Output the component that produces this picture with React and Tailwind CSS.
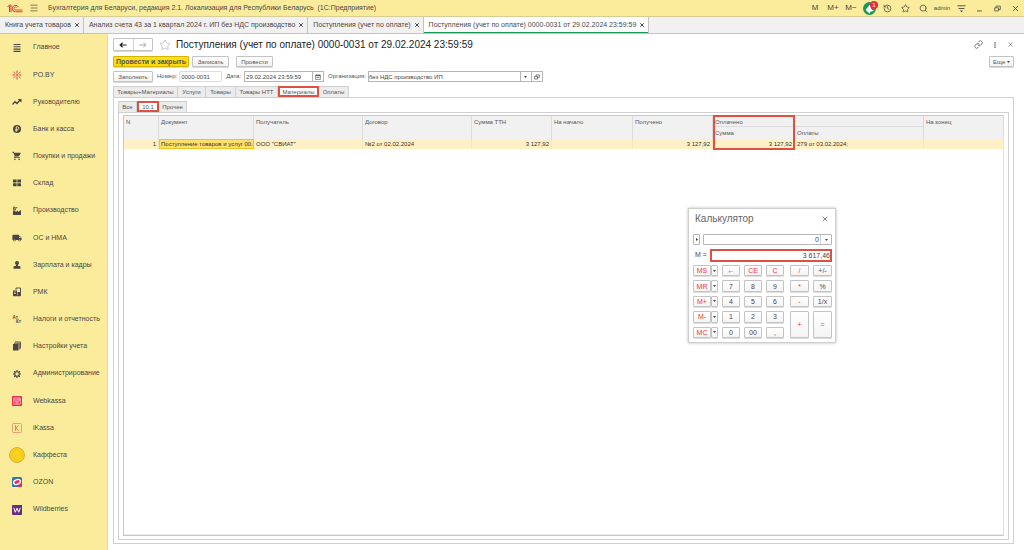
import React from "react";
import { MdShoppingCart, MdLocalShipping } from "react-icons/md";
import { History, Link, Search, Star, X } from "lucide-react";

const openTabs = [
  { title: "Книга учета товаров" },
  { title: "Анализ счета 43 за 1 квартал 2024 г. ИП без НДС производство" },
  { title: "Поступления (учет по оплате)" },
  {
    title: "Поступления (учет по оплате) 0000-0031 от 29.02.2024 23:59:59",
    active: true,
  },
];

const Svg = ({ children, className = "size-[10px]" }) => (
  <svg viewBox="0 0 20 20" className={className} fill="none" aria-hidden="true">
    {children}
  </svg>
);

const sections = [
  {
    name: "Главное",
    icon: (
      <Svg>
        <path d="M3 3h14M3 7.6h14M3 12.2h14M3 16.8h14" stroke="#4d4545" strokeWidth="2.2" />
      </Svg>
    ),
  },
  {
    name: "PO.BY",
    icon: (
      <Svg>
        <path
          d="M10 1v6M10 13v6M1 10h5M14 10h5M3 4l4 3.500M17 4l-4 3.500M3 16l4-3.500M17 16l-4-3.500"
          stroke="#e0444c"
          strokeWidth="2"
        />
        <circle cx="10" cy="10" r="1.800" fill="#e0444c" />
      </Svg>
    ),
  },
  {
    name: "Руководителю",
    icon: (
      <Svg>
        <path d="M1 15l5-5.500 4 3.500 6-7" stroke="#4d4545" strokeWidth="2.600" />
        <path d="M11.500 4H19v7.500z" fill="#4d4545" />
      </Svg>
    ),
  },
  {
    name: "Банк и касса",
    icon: (
      <Svg>
        <circle cx="10" cy="10" r="8" fill="#4d4545" />
        <path d="M8.500 15.500V5.500h2.500a2.700 2.700 0 010 5.400H6.500M6.500 13.300h4.500" stroke="#faec9b" strokeWidth="1.700" />
      </Svg>
    ),
  },
  { name: "Покупки и продажи", icon: <MdShoppingCart className="size-[10px]" /> },
  {
    name: "Склад",
    icon: (
      <Svg>
        <path d="M2 3h7.300v6H2zM10.700 3H18v6h-7.300zM2 10.500h7.300v6H2zM10.700 10.500H18v6h-7.300z" fill="#4d4545" />
      </Svg>
    ),
  },
  {
    name: "Производство",
    icon: (
      <Svg>
        <path d="M2 18V9h5v3l5-3v3l6-4v10z" fill="#4d4545" />
        <path d="M3.500 8V4M6.500 8V5M2 2.500h4M6.500 3.500h4" stroke="#4d4545" strokeWidth="2.200" />
      </Svg>
    ),
  },
  { name: "ОС и НМА", icon: <MdLocalShipping className="size-[10px]" /> },
  {
    name: "Зарплата и кадры",
    icon: (
      <Svg>
        <circle cx="10" cy="6" r="4" fill="#4d4545" />
        <path d="M8 9h4v2.500l5 1.500v4.500H3V13l5-1.500z" fill="#4d4545" />
      </Svg>
    ),
  },
  {
    name: "РМК",
    icon: (
      <Svg>
        <path d="M2 7h8v11H2zM11 10h6v8h-6z" fill="#4d4545" />
        <path d="M8 6V2h9v15.500H3" stroke="#4d4545" strokeWidth="1.800" />
        <path d="M4 10h4M4 13h4M10.500 5h4" stroke="#faec9b" strokeWidth="1.300" />
      </Svg>
    ),
  },
  {
    name: "Налоги и отчетность",
    icon: (
      <Svg>
        <text x="1" y="9" fontSize="9" fontWeight="bold" fill="#4d4545">Ат</text>
        <text x="8" y="18" fontSize="9" fontWeight="bold" fill="#4d4545">Кт</text>
      </Svg>
    ),
  },
  {
    name: "Настройки учета",
    icon: (
      <Svg>
        <path d="M2 6h11v13H2z" fill="#4d4545" />
        <path d="M4 4.500h10.500V17M6 2h11v13" stroke="#4d4545" strokeWidth="1.800" />
      </Svg>
    ),
  },
  {
    name: "Администрирование",
    icon: (
      <Svg>
        <circle cx="10" cy="10" r="4.600" stroke="#4d4545" strokeWidth="2.200" />
        <path
          d="M10 2v3M10 15v3M2 10h3M15 10h3M4.300 4.300l2.200 2.200M13.500 13.500l2.200 2.200M4.300 15.700l2.200-2.200M13.500 6.500l2.200-2.200"
          stroke="#4d4545"
          strokeWidth="2.400"
        />
      </Svg>
    ),
  },
  {
    name: "Webkassa",
    icon: (
      <Svg>
        <rect width="20" height="20" rx="2" fill="#f5284f" />
        <path d="M3.500 4h13v12h-13zM4 8h12M6 11.500h8M8 14h4M12 5v3" stroke="#fff" strokeWidth="1.300" />
      </Svg>
    ),
  },
  {
    name: "iKassa",
    icon: (
      <Svg>
        <rect x="1" y="1" width="18" height="18" rx="2" stroke="#e58a72" strokeWidth="1.600" />
        <path d="M7 4.500v11M13.500 4.500L8 10l5.500 5.500" stroke="#e3604f" strokeWidth="1.600" />
      </Svg>
    ),
  },
  {
    name: "Каффеста",
    icon: (
      <Svg className="size-4">
        <circle cx="10" cy="10" r="9.300" fill="#fbd320" stroke="#d9a92a" strokeWidth="1.200" />
        <circle cx="10" cy="10" r="6.500" stroke="#f3c313" />
      </Svg>
    ),
  },
  {
    name: "OZON",
    icon: (
      <Svg>
        <rect width="20" height="20" rx="3" fill="#2e74b8" />
        <path d="M20 12v5a3 3 0 01-3 3H10z" fill="#f22a58" />
        <ellipse cx="10" cy="10" rx="7" ry="4.600" transform="rotate(-20 10 10)" fill="#f22a58" stroke="#fff" strokeWidth="2.800" />
      </Svg>
    ),
  },
  {
    name: "Wildberries",
    icon: (
      <Svg>
        <rect width="20" height="20" rx="2" fill="#6f2c84" />
        <path d="M14 0h4a2 2 0 012 2v16a2 2 0 01-2 2h-4z" fill="#4b3a78" />
        <path d="M3.500 5.500L6.500 14.500L10 6.500L13.500 14.500L16.500 5.500" stroke="#fff" strokeWidth="2" />
      </Svg>
    ),
  },
];

const BarButton = ({ label, className = "w-[18px]", children }) => (
  <button type="button" aria-label={label} className={`flex items-center justify-center whitespace-nowrap ${className}`}>
    {children}
  </button>
);

const TitleBar = () => (
  <header className="flex h-[17px] shrink-0 items-center border-b border-[#d8cd96] bg-[#faec9b] text-[7px]">
    <svg viewBox="0 0 32 18" className="ml-[7px] h-[9px] w-4" fill="none" role="img" aria-label="1С">
      <path d="M1 6l4-4v14M5 2h3v14" stroke="#dd3b3b" strokeWidth="2" />
      <path d="M23 6.500A6.500 6.500 0 1017 15.500H31" stroke="#dd3b3b" strokeWidth="2" />
      <path d="M19.500 7A3 3 0 1017 12H31" stroke="#dd3b3b" strokeWidth="1.800" />
    </svg>
    <button type="button" aria-label="Меню" className="ml-[7px]">
      <Svg className="size-[8px]">
        <path d="M1 3h18M1 10h18M1 17h18" stroke="#6b6346" strokeWidth="2" />
      </Svg>
    </button>
    <h1 className="ml-[10px] grow whitespace-pre">
      Бухгалтерия для Беларуси, редакция 2.1. Локализация для Республики Беларусь{"  "}(1С:Предприятие)
    </h1>
    <div className="flex items-center">
      <BarButton className="w-[18px] text-[8px]">M</BarButton>
      <BarButton className="w-[18px] text-[8px]">M+</BarButton>
      <BarButton className="w-[18px] text-[8px]">M−</BarButton>
      <BarButton label="Уведомления" className="relative w-[18px]">
        <Svg className="size-[13px]">
          <circle cx="10" cy="10" r="10" fill="#169a55" />
          <path d="M4 12l7-8 2 7 4 3-6 1-1 3-3-3z" fill="#fff" />
        </Svg>
        <span className="absolute -top-px right-0 flex size-[8px] items-center justify-center rounded-full bg-[#f0283c] text-[6px] leading-none text-white">
          1
        </span>
      </BarButton>
      <BarButton label="История"><History size={9} /></BarButton>
      <BarButton label="Избранное"><Star size={9} /></BarButton>
      <BarButton label="Поиск"><Search size={9} /></BarButton>
      <BarButton className="w-5 text-[6px]">admin</BarButton>
      <BarButton label="Настройки">
        <Svg className="size-[9px]">
          <path d="M1 4h18M3.500 10h13" stroke="#4d4545" strokeWidth="2" />
          <path d="M6.500 14.500h7L10 18.500z" fill="#4d4545" />
        </Svg>
      </BarButton>
      <BarButton label="Свернуть">
        <Svg className="size-[7px]"><path d="M3 17h14" stroke="#4d4545" strokeWidth="2.500" /></Svg>
      </BarButton>
      <BarButton label="Восстановить">
        <Svg className="size-[7px]">
          <path d="M2 8h11v9H2zM6 8V3h12v10h-5" stroke="#4d4545" strokeWidth="2.200" />
        </Svg>
      </BarButton>
      <BarButton label="Закрыть"><X size={9} /></BarButton>
    </div>
  </header>
);

const OpenTabs = () => (
  <nav className="flex h-[17px] shrink-0 border-b border-[#c4c4c4] bg-[#f1f1f1] text-[7px]">
    {openTabs.map(({ title, active }) => (
      <div
        key={title}
        className={`flex items-center gap-[3px] border-r border-[#c4c4c4] pr-[3px] pl-[5px] ${
          active ? "bg-white shadow-[inset_0_-1px_0_#169a55]" : ""
        }`}
      >
        <button type="button" className="whitespace-nowrap">{title}</button>
        <button type="button" aria-label="Закрыть вкладку">
          <X size={6} strokeWidth={4} />
        </button>
      </div>
    ))}
  </nav>
);

const Sidebar = () => (
  <aside className="flex w-[108px] shrink-0 flex-col border-r border-[#f1dc8a] bg-[#faec9b] pb-[27px] text-[7px]">
    {sections.map(({ name, icon }) => (
      <button key={name} type="button" className="flex flex-1 items-center pl-2 text-left">
        <span className="flex w-[18px] justify-center">{icon}</span>
        <span className="ml-[7px] whitespace-nowrap">{name}</span>
      </button>
    ))}
  </aside>
);

const Button = ({ children, className = "" }) => (
  <button
    type="button"
    className={`h-[11px] rounded-[1px] border border-[#c3c3c3] bg-linear-to-b text-center leading-none whitespace-nowrap shadow-[0_1px_0_#d9d9d9] ${className}`}
  >
    {children}
  </button>
);

const Caret = () => (
  <svg viewBox="0 0 6 4" className="inline-block h-[2px] w-[3px]" aria-hidden="true">
    <path d="M0 0h6L3 4z" fill="#4d4545" />
  </svg>
);

const DocumentHeader = () => (
  <>
    <div className="flex h-[13px] items-center">
      <div className="flex h-[13px] w-10 rounded-[1px] border border-[#c3c3c3] shadow-[0_1px_0_#d9d9d9]">
        <button type="button" aria-label="Назад" className="flex flex-1 items-center justify-center border-r border-[#d4d4d4]">
          <Svg className="size-[8px]">
            <path d="M19 10H4M9 4.500L3 10l6 5.500" stroke="#222" strokeWidth="3" />
          </Svg>
        </button>
        <button type="button" aria-label="Вперед" className="flex flex-1 items-center justify-center">
          <Svg className="size-[8px]">
            <path d="M1 10h15M11 4.500l6 5.500-6 5.500" stroke="#9a9a9a" strokeWidth="2.200" />
          </Svg>
        </button>
      </div>
      <button type="button" aria-label="В избранное" className="ml-[6px] text-[#b5b5b5]">
        <Star size={12} strokeWidth={1.5} />
      </button>
      <h2 className="ml-[5px] grow text-[10px] leading-none whitespace-nowrap text-[#222]">
        Поступления (учет по оплате) 0000-0031 от 29.02.2024 23:59:59
      </h2>
      <div className="flex items-center gap-[9px]">
        <button type="button" aria-label="Ссылка"><Link size={9} /></button>
        <button type="button" aria-label="Еще действия" className="px-[2px]">
          <svg viewBox="0 0 2 8" className="h-[6px] w-[2px]"><path d="M1 0v2M1 3v2M1 6v2" stroke="#777" strokeWidth="2" /></svg>
        </button>
        <button type="button" aria-label="Закрыть"><X size={7} /></button>
      </div>
    </div>
    <div className="mt-[5px] flex gap-[3px]">
      <Button className="w-[76px] border-[#d6b400]! from-[#ffe01f] to-[#fbd70c] text-[7px] font-bold">
        Провести и закрыть
      </Button>
      <Button className="w-[37px] from-white to-[#f1f1f1]">Записать</Button>
      <Button className="ml-1 w-[37px] from-white to-[#f1f1f1]">Провести</Button>
      <Button className="ml-auto w-[25px] from-white to-[#f1f1f1]">
        Еще <Caret />
      </Button>
    </div>
    <div className="mt-1 flex h-[11px] items-center">
      <Button className="w-10 from-white to-[#f1f1f1]">Заполнить</Button>
      <label htmlFor="number" className="ml-1">Номер:</label>
      <input id="number" defaultValue="0000-0031" className="ml-[2px] h-[11px] w-[43px] rounded-[1px] border border-[#dcdcdc] px-px leading-none text-[#444]" />
      <label htmlFor="date" className="ml-1">Дата:</label>
      <div className="ml-[3px] flex h-[11px] w-20 border border-[#b5b5b5]">
        <input id="date" defaultValue="29.02.2024 23:59:59" className="w-0 grow px-px leading-none text-[#444]" />
        <button type="button" aria-label="Календарь" className="flex w-[11px] items-center justify-center border-l border-[#b5b5b5]">
          <Svg className="size-[6px]">
            <path d="M2 4h16v14H2z" stroke="#4d4545" strokeWidth="2" />
            <path d="M2 5h16M6 1v4M14 1v4M5 11h10" stroke="#4d4545" strokeWidth="2.500" />
          </Svg>
        </button>
      </div>
      <label htmlFor="company" className="ml-1">Организация:</label>
      <div className="ml-[2px] flex h-[11px] w-[175px] border border-[#b5b5b5]">
        <input id="company" defaultValue="без НДС производство ИП" className="w-0 grow leading-none text-[#444]" />
        <button type="button" aria-label="Выбрать" className="flex w-[11px] items-center justify-center border-l border-[#b5b5b5]">
          <Caret />
        </button>
        <button type="button" aria-label="Открыть" className="flex w-[11px] items-center justify-center border-l border-[#b5b5b5]">
          <Svg className="size-[6px]">
            <path d="M2 8h10v9H2zM7 8V3h11v9h-6" stroke="#4d4545" strokeWidth="2.200" />
          </Svg>
        </button>
      </div>
    </div>
  </>
);

// страницы формы; marked - вкладка в красной рамке
const Pages = ({ items, marked }) => (
  <div role="tablist" className="flex h-[11px] w-fit leading-none">
    {items.map(([name, width]) => (
      <button
        key={name}
        type="button"
        role="tab"
        aria-selected={name === marked}
        className={`whitespace-nowrap ${width} ${
          name === marked
            ? "border-2 border-[#dc5143] bg-white"
            : "border-t border-r border-[#d0d0d0] bg-[#ececec] first:border-l"
        }`}
      >
        {name}
      </button>
    ))}
  </div>
);

const mainPages = [
  ["Товары+Материалы", "w-[65px]"],
  ["Услуги", "w-[28px]"],
  ["Товары", "w-[30px]"],
  ["Товары НТТ", "w-[42px]"],
  ["Материалы", "w-[41px]"],
  ["Оплаты", "w-[30px]"],
];

const accountPages = [
  ["Все", "w-[19px]"],
  ["10.1", "w-[22px]"],
  ["Прочее", "w-[28px]"],
];

const th = "border-r border-[#dcdcdc] px-[2px] pt-[2px] text-left align-top font-normal";
const td = "border-r border-[#f7e6b4] px-[2px] whitespace-nowrap";

const PaymentsTable = () => (
  <div className="grow border border-[#c8c8c8] border-r-[#dedede] shadow-[inset_0_-1px_0_#ececec]">
    <table className="w-full table-fixed border-separate border-spacing-0 leading-[8px]">
      <colgroup>
        <col className="w-[35px]" />
        <col className="w-[95px]" />
        <col className="w-[109px]" />
        <col className="w-[109px]" />
        <col className="w-[80px]" />
        <col className="w-[81px]" />
        <col className="w-[80px]" />
        <col className="w-[82px]" />
        <col className="w-[129px]" />
        <col className="w-[80px]" />
      </colgroup>
      <thead className="bg-[#f1f1f1]">
        <tr className="h-[11px]">
          <th rowSpan={2} className={th}>N</th>
          <th rowSpan={2} className={th}>Документ</th>
          <th rowSpan={2} className={th}>Получатель</th>
          <th rowSpan={2} className={th}>Договор</th>
          <th rowSpan={2} className={th}>Сумма ТТН</th>
          <th rowSpan={2} className={th}>На начало</th>
          <th rowSpan={2} className={th}>Получено</th>
          <th colSpan={2} className={`${th} border-b`}>Оплачено</th>
          <th rowSpan={2} className={th}>На конец</th>
        </tr>
        <tr className="h-[12px]">
          <th className={`${th} relative`}>
            Сумма
            <span className="pointer-events-none absolute -top-[12px] -right-px -bottom-[11px] left-0 border-2 border-[#dc5143]" />
          </th>
          <th className={th}>Оплаты</th>
        </tr>
      </thead>
      <tbody className="text-[#333]">
        <tr className="h-[10px] bg-[#fff0c5]">
          <td className={`${td} text-right`}>1</td>
          <td className="overflow-hidden border border-[#f0c419] bg-[#fde06b] pl-px whitespace-nowrap">
            Поступление товаров и услуг 00..
          </td>
          <td className={td}>ООО "СВИАТ"</td>
          <td className={td}>№2 от 02.02.2024</td>
          <td className={`${td} text-right`}>3 127,92</td>
          <td className={td} />
          <td className={`${td} text-right`}>3 127,92</td>
          <td className={`${td} text-right`}>3 127,92</td>
          <td className={td}>279 от 03.02.2024;</td>
          <td className={td} />
        </tr>
      </tbody>
    </table>
  </div>
);

const CalcKey = ({ children, red, className = "" }) => (
  <button
    type="button"
    className={`flex items-center justify-center rounded-[1px] border border-[#c3c3c3] bg-linear-to-b from-white to-[#f4f4f4] leading-none shadow-[0_1px_0_#dedede] ${
      red ? "text-[#f0323c]" : ""
    } ${className}`}
  >
    {children}
  </button>
);

const memoryRows = [
  ["MS", "←", "CE", "C"],
  ["MR", "7", "8", "9"],
  ["M+", "4", "5", "6"],
  ["M-", "1", "2", "3"],
  ["MC", "0", "00", ","],
];

const Calculator = () => (
  <section className="absolute top-[208px] right-[188px] w-[148px] border border-[#cfcfcf] bg-white pr-[3px] pb-1 pl-1 text-[7px] shadow-[0_0_3px_#bbb]">
    <div className="flex h-[25px] items-start justify-between px-[2px] pt-[5px]">
      <h3 className="text-[10px] leading-none text-[#666]">Калькулятор</h3>
      <button type="button" aria-label="Закрыть" className="pt-px pr-px"><X size={8} /></button>
    </div>
    <div className="flex h-[11px] gap-[3px]">
      <button type="button" aria-label="Показать ленту" className="flex w-[7px] items-center justify-center rounded-[1px] border border-[#b5b5b5]">
        <svg viewBox="0 0 4 6" className="h-[3px] w-[2px]"><path d="M0 0v6l4-3z" fill="#333" /></svg>
      </button>
      <div className="flex grow rounded-[1px] border border-[#b5b5b5]">
        <input aria-label="Результат" defaultValue="0" className="w-0 grow px-px text-right leading-none" />
        <button type="button" aria-label="История вычислений" className="flex w-[11px] items-center justify-center border-l border-[#d4d4d4]">
          <Caret />
        </button>
      </div>
    </div>
    <div className="mt-1 flex h-3 items-center">
      <label htmlFor="memory" className="w-[17px] pl-[2px] whitespace-nowrap">M =</label>
      <input
        id="memory"
        defaultValue="3 617,46"
        className="h-[13px] w-0 grow border-2 border-[#dc5143] text-right leading-none text-[#444]"
      />
    </div>
    <div className="mt-1 flex h-[73px] gap-[6px]">
      <div className="grid grid-cols-[25px_18px_18px_18px] grid-rows-5 gap-x-[4px] gap-y-1">
        {memoryRows.map(([memory, ...keys]) => (
          <React.Fragment key={memory}>
            <div className="flex">
              <CalcKey red className="grow">{memory}</CalcKey>
              <CalcKey className="w-[7px]"><Caret /></CalcKey>
            </div>
            {keys.map((key) => (
              <CalcKey key={key} red={key === "CE" || key === "C"}>{key}</CalcKey>
            ))}
          </React.Fragment>
        ))}
      </div>
      <div className="grid grow grid-cols-2 grid-rows-5 gap-1">
        <CalcKey red>/</CalcKey>
        <CalcKey>+/-</CalcKey>
        <CalcKey red>*</CalcKey>
        <CalcKey>%</CalcKey>
        <CalcKey red>-</CalcKey>
        <CalcKey>1/x</CalcKey>
        <CalcKey red className="row-span-2">+</CalcKey>
        <CalcKey red className="row-span-2">=</CalcKey>
      </div>
    </div>
  </section>
);

const App = () => {
  return (
    <div className="relative flex min-h-screen flex-col bg-white font-['Liberation_Sans',Arial,sans-serif] text-[#4d4545]">
      <TitleBar />
      <OpenTabs />
      <div className="flex grow">
        <Sidebar />
        <main className="flex min-w-0 grow flex-col pt-1 pr-[10px] pb-[6px] pl-[5px] text-[6px] text-[#555]">
          <DocumentHeader />
          <div className="mt-1">
            <Pages items={mainPages} marked="Материалы" />
          </div>
          <div className="flex grow flex-col border border-[#d0d0d0] px-1 pt-[3px] pb-[3px]">
            <Pages items={accountPages} marked="10.1" />
            <div className="flex grow flex-col border border-[#d0d0d0] px-1 pt-[2px] pb-[3px]">
              <PaymentsTable />
            </div>
          </div>
        </main>
      </div>
      <Calculator />
    </div>
  );
};

export default App;
